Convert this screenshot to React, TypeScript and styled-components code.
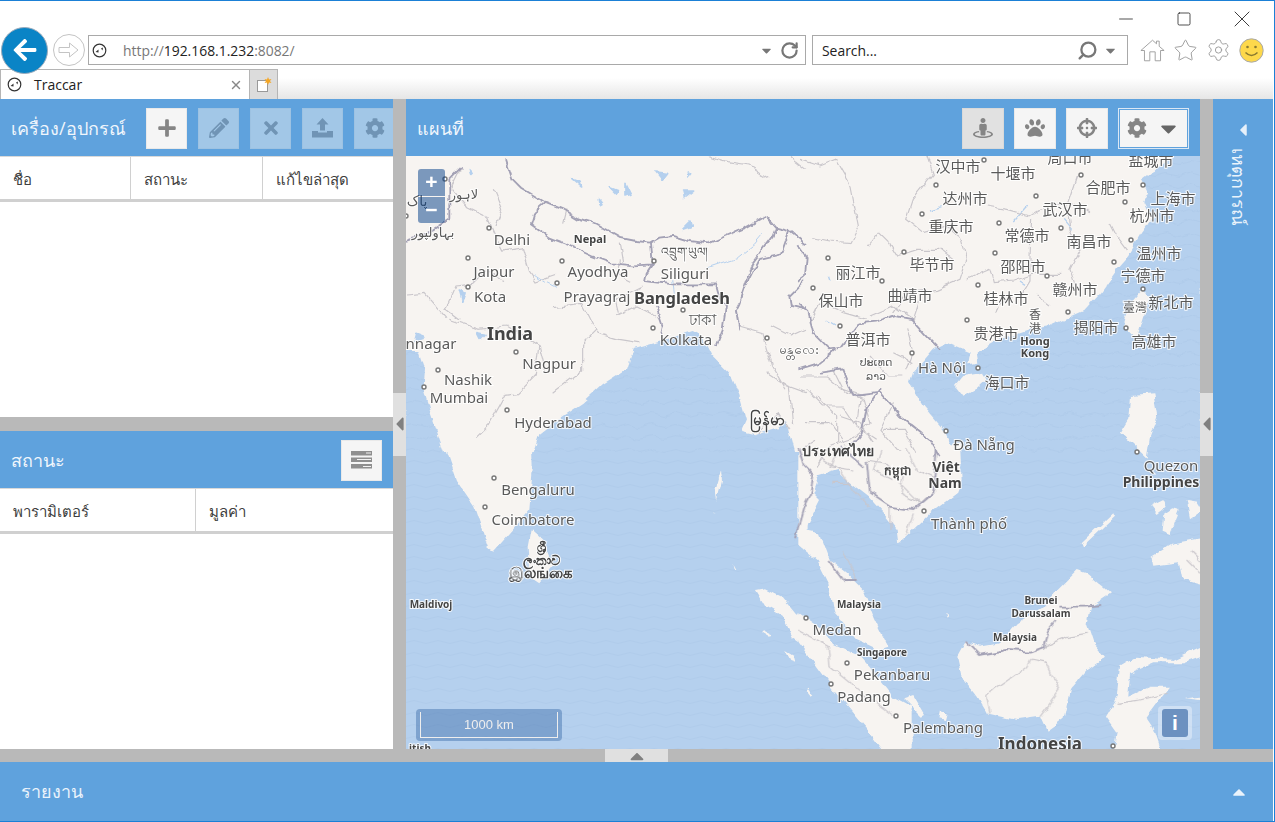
import * as React from "react";
import styled, { createGlobalStyle } from "styled-components";
import { FaArrowLeft, FaCaretDown, FaCaretLeft, FaCaretUp, FaCog, FaCrosshairs, FaPaw, FaPencilAlt, FaPlus, FaStreetView, FaTimes } from "react-icons/fa";
import { Minus, RotateCw, Search, Settings, Square, Star, X } from "lucide-react";

const PANEL = "#5fa2dd";
const SPLIT = "#b9b9b9";
const UI_FONT = '"Open Sans", "Noto Sans", "DejaVu Sans", sans-serif';

const Global = createGlobalStyle`
  html, body { margin: 0; padding: 0; height: 100%; background: #fff; }
  #root { height: 100%; }
  * { box-sizing: border-box; }
`;

const Win = styled.div`
  width: 1275px;
  height: 822px;
  display: flex;
  flex-direction: column;
  overflow: hidden;
  background: #fff;
  border-top: 1px solid #1b80d6;
  border-right: 1px solid #1b80d6;
  border-bottom: 1px solid #1b80d6;
  padding-right: 1px;
  font-family: ${UI_FONT};
`;

const TitleRow = styled.div`
  height: 33px;
  flex: none;
  display: flex;
  justify-content: flex-end;
  align-items: center;
  color: #111;
  padding: 2px 2px 0 0;
`;

const WinBtn = styled.div`
  width: 58px;
  display: flex;
  justify-content: center;
`;

const NavRow = styled.div`
  height: 35px;
  flex: none;
  display: flex;
  align-items: center;
  padding-bottom: 3px;
`;

const BackBtn = styled.div`
  width: 47px;
  height: 47px;
  margin: 0 5px 0 1px;
  flex: none;
  border-radius: 50%;
  background: #0a84c6;
  border: 1px solid #9ab;
  color: #fff;
  display: flex;
  align-items: center;
  justify-content: center;
  font-size: 26px;
  z-index: 2;
`;

const ForwardBtn = styled.div`
  width: 32px;
  height: 32px;
  flex: none;
  margin-right: 3px;
  border-radius: 50%;
  border: 1px solid #c4c4c4;
  display: flex;
  align-items: center;
  justify-content: center;
`;

const Field = styled.div<{ $w: number; $ml?: number }>`
  width: ${(p) => p.$w}px;
  margin-left: ${(p) => p.$ml ?? 0}px;
  height: 30px;
  flex: none;
  border: 1px solid #a9a9a9;
  display: flex;
  align-items: center;
  font-size: 13.9px;
  color: #222;
`;

const UrlGrey = styled.span`
  color: #777;
`;

const UrlText = styled.span`
  margin-left: 16px;
  flex: 1;
  white-space: nowrap;
`;

const SearchText = styled.span`
  margin-left: 9px;
  flex: 1;
`;

const Caret = styled.span<{ $l?: number; $r?: number }>`
  color: #777;
  display: flex;
  font-size: 15px;
  margin: 0 ${(p) => p.$r ?? 0}px 0 ${(p) => p.$l ?? 0}px;
`;

const Flip = styled(Caret)`
  transform: scaleX(-1);
`;

const ToolIcons = styled.div`
  display: flex;
  align-items: center;
  margin-left: 12px;
  gap: 8px;
  color: #999;
`;

const ToolSlot = styled.div`
  width: 25px;
  display: flex;
  justify-content: center;
`;

const TabRow = styled.div`
  height: 30px;
  flex: none;
  display: flex;
  align-items: flex-end;
  background: linear-gradient(#fff 0, #fff 30%, #e6e6e6 100%);
`;

const Tab = styled.div`
  width: 250px;
  height: 30px;
  display: flex;
  align-items: center;
  border: 1px solid #b5b5b5;
  border-bottom: 0;
  background: #fff;
  padding: 0 6px 0 3px;
  font-size: 14px;
  color: #222;
  z-index: 1;
`;

const TabTitle = styled.span`
  margin-left: 12px;
  flex: 1;
`;

const NewTab = styled.div`
  width: 28px;
  height: 30px;
  background: #dcdcdc;
  border: 1px solid #b5b5b5;
  border-left: 0;
  border-bottom: 0;
  display: flex;
  align-items: center;
  justify-content: center;
`;

const Globe = styled.svg`
  margin-left: 3px;
  flex: none;
`;

const Workspace = styled.div`
  flex: 1;
  min-height: 0;
  display: flex;
  flex-direction: column;
  background: ${SPLIT};
`;

const UpperArea = styled.div`
  flex: 1;
  min-height: 0;
  display: flex;
`;

const LeftColumn = styled.div`
  width: 393px;
  flex: none;
  display: flex;
  flex-direction: column;
`;

const Panel = styled.div<{ $h?: number }>`
  display: flex;
  flex-direction: column;
  background: #fff;
  ${(p) => (p.$h ? `height: ${p.$h}px; flex: none;` : "flex: 1; min-height: 0;")}
`;

const PanelHead = styled.div`
  height: 57px;
  flex: none;
  background: ${PANEL};
  display: flex;
  align-items: center;
  overflow: hidden;
  padding-top: 1px;
`;

const PanelTitle = styled.div`
  flex: 1;
  color: #f0f6fc;
  font-size: 18px;
  padding-left: 11px;
  white-space: nowrap;
`;

const ToolGroup = styled.div<{ $r: number; $gap?: number }>`
  display: flex;
  gap: ${(p) => p.$gap ?? 11}px;
  flex: none;
  margin-right: ${(p) => p.$r}px;
`;

const ToolButton = styled.div<{ $off?: boolean; $down?: boolean; $w?: number; $focus?: boolean }>`
  width: ${(p) => p.$w ?? 41}px;
  height: 41px;
  flex: none;
  display: flex;
  align-items: center;
  justify-content: center;
  gap: 9px;
  font-size: 20px;
  color: #858585;
  background: ${(p) => (p.$down ? "#e1e1e1" : "#f5f5f5")};
  border: 1px solid ${(p) => (p.$focus ? "#dbe8f5" : p.$down ? "#d9d9d9" : "#e9e9e9")};
  opacity: ${(p) => (p.$off ? 0.45 : 1)};
  ${(p) => p.$focus && `box-shadow: inset 0 0 0 1px ${PANEL};`}
`;

const DarkCaret = styled.span`
  display: flex;
  font-size: 25px;
  color: #666;
`;

const GridHead = styled.div`
  height: 46px;
  flex: none;
  display: flex;
  border-top: 1px solid #d9d9d9;
  border-bottom: 3px solid #d0d0d0;
`;

const GridCol = styled.div<{ $w?: number }>`
  ${(p) => (p.$w ? `width: ${p.$w}px; flex: none;` : "flex: 1;")}
  padding: 3px 0 0 13px;
  display: flex;
  align-items: center;
  font-size: 15px;
  color: #404040;
  border-right: 1px solid #d0d0d0;
  &:last-child { border-right: 0; }
`;

const HSplit = styled.div`
  height: 14px;
  flex: none;
`;

const VSplit = styled.div`
  width: 13px;
  flex: none;
  display: flex;
  flex-direction: column;
  justify-content: center;
`;

const VGrip = styled.div`
  height: 63px;
  background: #e0e0e0;
  display: flex;
  align-items: center;
  justify-content: center;
  color: #808080;
  font-size: 22px;
`;

const BottomSplit = styled.div`
  height: 13px;
  flex: none;
  display: flex;
  justify-content: center;
`;

const HGrip = styled.div`
  width: 63px;
  background: #e0e0e0;
  display: flex;
  align-items: center;
  justify-content: center;
  color: #808080;
  font-size: 22px;
`;

const MapPanel = styled.div`
  flex: 1;
  min-width: 0;
  display: flex;
  flex-direction: column;
`;

const MapBody = styled.div`
  flex: 1;
  min-height: 0;
  position: relative;
  overflow: hidden;
  background: #b5d0ee;
`;

const MapDrawing = styled.svg`
  display: block;
  width: 100%;
  height: 100%;
`;

const Rough = styled.g`
  filter: url(#rough);
`;

const Soft = styled.g`
  filter: blur(0.4px);
`;

const ZoomBox = styled.div`
  position: absolute;
  left: 12px;
  top: 13px;
  width: 27px;
  height: 54px;
  border-radius: 3px;
  overflow: hidden;
  display: flex;
  flex-direction: column;
  gap: 1px;
`;

const ZoomBtn = styled.div`
  flex: 1;
  background: rgba(0, 60, 136, 0.5);
  color: #fff;
  font: bold 21px/26px "Liberation Sans", sans-serif;
  text-align: center;
`;

const ScaleBox = styled.div`
  position: absolute;
  left: 10px;
  bottom: 8px;
  width: 146px;
  height: 32px;
  border-radius: 4px;
  background: rgba(0, 60, 136, 0.3);
  padding: 3px 4px;
`;

const ScaleBar = styled.div`
  height: 100%;
  border: 1px solid #eee;
  border-top: 0;
  color: #eee;
  font: 13px/25px "Liberation Sans", sans-serif;
  text-align: center;
`;

const InfoBox = styled.div`
  position: absolute;
  right: 8px;
  bottom: 9px;
  width: 34px;
  height: 34px;
  border-radius: 4px;
  background: rgba(255, 255, 255, 0.35);
  padding: 3px 4px;
`;

const InfoBtn = styled.div`
  height: 100%;
  border-radius: 3px;
  background: #6c91c0;
  color: #fff;
  font: bold 21px/28px "Liberation Sans", sans-serif;
  text-align: center;
`;

const RightRail = styled.div`
  width: 60px;
  flex: none;
  background: ${PANEL};
  display: flex;
  flex-direction: column;
  align-items: center;
  padding-top: 21px;
  color: #e6f0fa;
  font-size: 20px;
`;

const RailText = styled.div`
  writing-mode: vertical-rl;
  margin: 8px 8px 0 0;
  font-size: 18px;
  color: #eaf3fb;
  white-space: nowrap;
`;

const ReportBar = styled.div`
  height: 59px;
  flex: none;
  background: ${PANEL};
  display: flex;
  align-items: center;
  justify-content: space-between;
  padding: 0 24px 0 21px;
  color: #eaf3fb;
  font-size: 18px;
`;

const Label = styled.text<{ $size?: number; $bold?: boolean; $cjk?: boolean }>`
  font-family: ${(p) => (p.$cjk ? '"Noto Sans CJK SC", sans-serif' : '"Noto Sans", "DejaVu Sans", sans-serif')};
  font-size: ${(p) => p.$size ?? 15}px;
  font-weight: ${(p) => (p.$bold ? 700 : 400)};
  fill: ${(p) => (p.$bold ? "#444" : "#5a5a5a")};
  stroke: #fff;
  stroke-width: 2px;
  stroke-opacity: 0.85;
  paint-order: stroke;
  text-anchor: middle;
`;

const LAND = "#f7f4f1";
const WATER = "#b5d0ee";
const THICK = "#a3a1b5";
const THIN = "#c9c6cb";

type L = [string, number, number, number?, ("b" | "c")?];

const LABELS: L[] = [
  ["Delhi", 512, 245, 15], ["Jaipur", 494, 277, 15], ["Kota", 490, 302, 15],
  ["Ayodhya", 598, 277, 15], ["Siliguri", 685, 279, 15], ["Prayagraj", 597, 302, 15],
  ["Bangladesh", 682, 304, 16.5, "b"], ["Nepal", 590, 243, 11, "b"], ["India", 510, 340, 18, "b"],
  ["ঢাকা", 702, 325, 15], ["Kolkata", 686, 345, 15], ["nnagar", 431, 349, 15],
  ["Nagpur", 549, 369, 15], ["Nashik", 468, 385, 15], ["Mumbai", 459, 403, 15],
  ["Hyderabad", 553, 428, 15], ["Bengaluru", 538, 495, 15], ["Coimbatore", 533, 525, 15],
  ["Maldivoj", 431, 608, 10, "b"], ["မန္တလေး", 799, 354, 13], ["မြန်မာ", 767, 425, 15, "b"],
  ["بہاولپور", 433, 237, 13], ["لاہور", 464, 199, 13], ["پاک", 417, 206, 14],
  ["འབྲུག་ཡུལ།", 684, 256, 12],
  ["ශ්‍රී", 541, 552, 13, "b"], ["ලංකාව", 541, 565, 13, "b"], ["இலங்கை", 541, 578, 15, "b"],
  ["汉中市", 958, 172, 15, "c"], ["十堰市", 1013, 179, 15, "c"], ["周口市", 1070, 163, 15, "c"], ["盐城市", 1151, 166, 15, "c"],
  ["合肥市", 1108, 193, 15, "c"], ["上海市", 1173, 204, 15, "c"], ["杭州市", 1152, 221, 15, "c"], ["达州市", 965, 204, 15, "c"],
  ["武汉市", 1065, 215, 15, "c"], ["重庆市", 951, 232, 15, "c"], ["常德市", 1027, 241, 15, "c"], ["南昌市", 1089, 247, 15, "c"],
  ["温州市", 1159, 259, 15, "c"], ["丽江市", 858, 278, 15, "c"], ["毕节市", 932, 270, 15, "c"], ["邵阳市", 1023, 272, 15, "c"],
  ["宁德市", 1143, 281, 15, "c"], ["保山市", 841, 306, 15, "c"], ["曲靖市", 910, 301, 15, "c"], ["桂林市", 1006, 304, 15, "c"],
  ["赣州市", 1075, 295, 15, "c"], ["新北市", 1171, 308, 15, "c"], ["臺灣", 1135, 312, 12, "c"], ["香", 1035, 319, 12, "c"], ["港", 1035, 333, 12, "c"],
  ["揭阳市", 1096, 333, 15, "c"], ["贵港市", 996, 339, 15, "c"], ["普洱市", 868, 345, 15, "c"], ["高雄市", 1154, 347, 15, "c"],
  ["海口市", 1007, 388, 15, "c"], ["Hong", 1035, 345, 11, "b"], ["Kong", 1035, 357, 11, "b"], ["Hà Nội", 942, 373, 15],
  ["ປະເທດ", 876, 366, 11], ["ລາວ", 876, 380, 11], ["Đà Nẵng", 984, 450, 15], ["ประเทศไทย", 838, 456, 14, "b"], ["កម្ពុជា", 898, 475, 12, "b"],
  ["Việt", 946, 472, 14, "b"], ["Nam", 945, 488, 14, "b"], ["Thành phố", 969, 529, 15], ["Quezon", 1171, 471, 15],
  ["Philippines", 1161, 487, 14, "b"], ["Malaysia", 859, 608, 10, "b"], ["Brunei", 1041, 604, 10, "b"], ["Darussalam", 1041, 617, 10, "b"],
  ["Malaysia", 1015, 641, 10, "b"], ["Medan", 837, 635, 15], ["Singapore", 882, 656, 10, "b"], ["Pekanbaru", 892, 680, 15],
  ["Padang", 864, 702, 15], ["Palembang", 943, 733, 15], ["Indonesia", 1040, 750, 17, "b"], ["itish", 420, 752, 10, "b"],
];

const CITIES: [number, number][] = [
  [489, 228], [468, 258], [468, 287], [562, 261], [557, 283], [654, 261], [683, 310], [653, 328], [516, 352], [438, 370],
  [424, 387], [507, 410], [767, 338], [445, 179], [406, 216], [984, 160], [1081, 175], [1143, 185], [936, 185], [1036, 196],
  [1125, 202], [922, 214], [999, 223], [1061, 228], [1131, 240], [904, 252], [995, 253], [828, 258], [1114, 262], [1047, 276],
  [882, 281], [978, 285], [813, 288], [1143, 289], [1068, 312], [967, 320], [840, 326], [1126, 328], [912, 353], [978, 368],
  [946, 431], [494, 478], [485, 507], [806, 618], [924, 511], [847, 663], [831, 684], [896, 716], [1113, 746], [1137, 452],
];

const MapArt = () => (
  <MapDrawing viewBox="406 156 794 593" preserveAspectRatio="none">
    <defs>
      <filter id="rough" x="-5%" y="-5%" width="110%" height="110%">
        <feTurbulence type="fractalNoise" baseFrequency="0.07" numOctaves="3" seed="4" />
        <feDisplacementMap in="SourceGraphic" scale="7" xChannelSelector="R" yChannelSelector="G" />
        <feGaussianBlur stdDeviation="0.45" />
      </filter>
      <pattern id="sea" width="24" height="12" patternUnits="userSpaceOnUse">
        <rect width="24" height="12" fill={WATER} />
        <path d="M0 6 q6 -3 12 0 t12 0" fill="none" stroke="#b0cceb" strokeWidth="1" />
      </pattern>
      <pattern id="seaZ" width="72" height="36" patternUnits="userSpaceOnUse">
        <rect width="72" height="36" fill={WATER} />
        <path d="M0 18 q18 -9 36 0 t36 0" fill="none" stroke="#b0cceb" strokeWidth="3" />
      </pattern>
    </defs>
    <rect x="406" y="156" width="794" height="300" fill={LAND} />
    <rect x="406" y="452" width="794" height="297" fill="url(#sea)" />
    <Rough>
      <g transform="translate(406 156) scale(.3333)" fill="url(#seaZ)">
        <polygon points="-5,585 40,585 55,630 50,690 70,760 120,905 -5,905" />
        <polygon points="375,910 400,835 470,780 530,740 590,685 660,640 680,580 750,560 800,545 860,525 890,540 920,600 970,650 1000,720 1020,790 1005,825 1050,835 1110,815 1140,795 1170,910" />
        <g fill={WATER} stroke={WATER} strokeWidth="5" strokeLinejoin="round">
          <path d="M500 65l25 10 5 15zM610 95l25 10-5 10zM660 85l15 30-15 5zM750 45l35 5-15 20zM830 105l30 0-25 20zM830 220l25-25 5 15zM190 40l10 10-5 5zM580 130l8 10-6 3zM850 45l10 5-8 10z" />
          <path d="M215 530l25 5-15 15zM30 535l25 10-30 10zM160 405l20 10-10 25z" />
        </g>
        <path fill="none" stroke={WATER} strokeWidth="3" d="M905 335l90-30 50-40 25-30M800 370l5 40M385 355l30 20 40 20" />
      </g>
      <g transform="translate(800 156) scale(.3333)" fill="url(#seaZ)">
        <polygon points="1125,-5 1090,30 1050,50 1025,70 1045,110 1030,140 1055,190 1020,240 985,300 950,340 900,410 850,465 750,510 690,520 600,550 530,590 535,620 505,625 510,590 440,560 400,580 340,650 330,680 370,750 430,820 470,910 1205,910 1205,-5" />
        <polygon fill={LAND} points="465,690 490,660 550,650 562,670 530,700 490,722" />
        <polygon fill={LAND} points="1030,395 1052,420 1010,550 970,510 990,440" />
        <polygon fill={LAND} points="990,720 1060,715 1072,780 1050,840 1040,905 960,830 985,790" />
        <path fill="none" stroke={WATER} strokeWidth="4" d="M640 195l40-45M790 190l25 30M390 165l35-10M85 360l5 15M80 495l25 15M660 375l15 10" />
      </g>
      <g transform="translate(406 450) scale(.3333)" fill={LAND}>
        <polygon points="112,-20 150,90 205,170 245,290 265,302 320,240 370,180 380,60 378,-20" />
        <polygon points="375,238 410,270 440,350 400,400 370,380 365,290" />
        <polygon points="1170,-20 1190,60 1195,200 1185,290 1205,305 1205,-20" />
        <polygon points="1050,420 1080,415 1130,440 1170,490 1205,510 1205,590 1160,560 1130,500 1080,470" />
        <path d="M945 60l3 30-15 60-5-30zM925 180l3 10-5 0zM980 345l8 15-5 0zM1070 540l30 15-5 5-25-15zM1135 600l25 15 5 20-15-5z" />
      </g>
      <g transform="translate(800 450) scale(.3333)" fill={LAND}>
        <polygon points="-5,-20 480,-20 485,90 470,130 390,190 360,220 295,280 290,240 250,190 205,140 140,90 110,60 60,75 40,130 60,150 30,210 15,240 60,250 90,330 140,370 190,420 225,510 265,590 235,600 170,570 100,490 85,400 50,330 -5,285" />
        <polygon points="-5,490 60,535 100,580 170,610 240,690 280,740 335,770 335,905 250,905 200,840 100,720 -5,575" />
        <polygon points="500,575 475,620 490,690 530,740 560,790 650,810 720,800 740,845 790,810 810,720 860,660 915,620 880,580 860,520 870,470 930,430 860,370 830,360 770,420 730,470 650,520 600,580 540,590" />
        <polygon points="1205,590 1120,630 1010,620 960,650 950,740 915,800 950,850 940,905 1085,905 1060,830 1040,800 1070,760 1110,710 1050,710 985,740 990,670 1060,640 1150,640 1205,620" />
        <polygon points="1050,170 1090,150 1100,170 1070,195" />
        <polygon points="1090,195 1120,175 1140,180 1110,255 1085,245" />
        <polygon points="1160,150 1190,155 1205,180 1170,205" />
        <polygon points="1055,320 1120,280 1205,265 1205,405 1150,390 1140,340 1060,350" />
        <polygon points="940,190 945,200 850,290 845,280" />
        <path d="M20 710l20 25-5 5-20-25zM310 745l30-10 35 60-10 5zM420 780l20 10-5 20-20-5zM435 485l10 10-5 5zM1155 745l45-5 0 10z" />
      </g>
      <g transform="translate(406 156) scale(.3333)" fill="none">
        <g stroke={THIN} strokeWidth="3.5">
          <path d="M165 35l-30 60 50 60 60 30 30 70 15 30 60-10 20 70 20 30 60-20M265 100l25 60-20 50M300 375l-60-30-40 40-50 5-30 70 40 30M130 490l90 30 80-10 100 60 20 80M395 570l-10 90-50 50-35 5-50 90-40 40M440 455l90-10 40 80-40 40 0 80-90 70M630 480l60-30 60 30M570 530l70 20 60 10M0 420l60-5 60 70" />
          <path d="M1000 510l70 20 30 100 40 70M1095 510l60 30 45-20M1085 650l60 40 55 20M1060 830l60-60 30 50M1150 690l10 120M640 260l10 60M480 160l-10 40M900 0l60 20 70 10 60 40M640 310l-5 50 40 20M640 470l-10-40 80-40M1150 0l50 40" />
        </g>
        <g stroke={THICK} strokeWidth="5.500">
          <path d="M300 10l20 60 25 25 75 45 50 20 50 30 50 15 30 17 40 23 50 10 45 5 25-15 40-5 50 15 60 7 50-22 60-25 60-35 30 35 40 10 50 40" />
          <path d="M420 140l-35 30-10 35 55 40 65 25 65 30 60 22 60 6 60-3-5-65M745 320l-20 30-5 25 80 10 50 0 80 0 10 35 20 30-10 70-20 50M750 450l20 60-5 30" />
          <path d="M1110 215l-10 25-60 80-40 120-10 20 10 60M1150 225l-25 70-65 15-40 80M165 35l-35 35 0 70 0 50-70 45-60 20M1200 370l-50 50 5 30 45 10" />
        </g>
      </g>
      <g transform="translate(800 156) scale(.3333)" fill="none">
        <g stroke={THIN} strokeWidth="3.5">
          <path d="M0 10l60 20 50-20 40 70 25 130-25 50-60-5-50-10M380 -5l20 60-60 75-20 60 50 40 70-20 40 30 20 70-20 60-70 30-90 10-40 60M205 270l30-40 30 30 25 40 60-20 70 0 50 40M560 150l60 10 70 20 50-30 70-10 60 30M695 185l-5 120 0 70-30 50M830 60l-30 90 10 70 30 60-30 60 20 60M500 370l70-30 10 40 60-5 60-20 90 0M930 200l20 40 30 40M590 470l10-30 40-20M710 420l40 30M210 480l70-30 60 40 20-60M30 500l30-60 70 30 70 20M0 660l80 0 60 50 50 20 20 70 -60 50-60 20-40 60M50 720l60 60 0 90M180 730l-10 80 60 40M280 740l-40 80 60 70M320 520l20 70-20 50M20 700l50 50 60 0 40 60M100 640l30 60 60 20M210 600l50 60 50 0M120 780l60 20 40 60M20 800l70 0 50 70M250 820l60 0 40 70M280 590l60 30M0 880l50-30" />
        </g>
        <g stroke={THICK} strokeWidth="5.500">
          <path d="M-5 265l25 35-5 60-20 15M-5 445l30 25 15 60 50 50 35-5 50-70 50-5 60-20 50 10 45 50 40 40M-5 640l65-20 50-40M60 650l70-10 30 80 80-10 60 70 90 70 30 50M240 700l-40 60-15 70-30 40" />
        </g>
      </g>
      <g transform="translate(800 450) scale(.3333)" fill="none">
        <g stroke={THIN} strokeWidth="3.500">
          <path d="M60 20l60 40 40 60 50 50M200 30l60 10 50 40 -10 50 60 30M150 100l-50 0M320 0l30 60 60 30M240 0l-20 60 60 30M270 170l0 70M340 190l-20 60M85 590l5 60 110 90 80 60M-5 540l95 50M690 630l-10 20-100 70-20 20 10 50M690 630l50 10 40 80-60 80M730 590l70-30 60-10M950 760l70-10 80-20M130 300l40 90M110 0l-20 50 70 10M400 60l50 10M300 100l60 60 50-40M1170 300l30 30M1160 330l40 40" />
        </g>
        <g stroke={THICK} strokeWidth="5.500">
          <path d="M-5 -5l15 50 30 30 -10 60 -20 40 -25 90M200 30l10 100 60 40 70 10 60-50 10-130M85 330l45 60 40 0M120 -10l70 60M500 575l40 40 80-15 70 5 40-15 15-50 25-30M775 470l75 0 50-5" />
        </g>
      </g>
    </Rough>
    <Soft>
      <g fill="#fff" stroke="#777" strokeWidth="1.4">
        {CITIES.map(([x, y]) => (
          <circle key={`${x}-${y}`} cx={x} cy={y} r="2" />
        ))}
      </g>
      {LABELS.map(([t, x, y, s, k]) => (
        <Label key={`${t}${x}`} x={x} y={y} $size={s} $bold={k === "b"} $cjk={k === "c"}>
          {t}
        </Label>
      ))}
    </Soft>
  </MapDrawing>
);

const PageGlobe = () => (
  <Globe width="15" height="15" viewBox="0 0 15 15">
    <circle cx="7.500" cy="7.500" r="6.300" fill="#fff" stroke="#333" strokeWidth="1.200" />
    <path d="M3.500 9l3-2.500v3zM9 5.500l2-1-.5 3z" fill="#333" />
  </Globe>
);

const NewTabIcon = () => (
  <svg width="16" height="16" viewBox="0 0 16 16">
    <rect x="1.500" y="3.500" width="10" height="11" fill="#fff" stroke="#999" />
    <path d="M12 0l1 2.500 2.500-.5-1.500 2 1.500 2-2.500-.5-1 2.500-1-2.500-2.500.5 1.500-2-1.500-2 2.500.5z" fill="#f5a623" />
  </svg>
);

const UploadIcon = () => (
  <svg width="21" height="20" viewBox="0 0 21 20" fill="currentColor">
    <path d="M10.500 0l6 6.500h-3.500v6h-5v-6h-3.500z" />
    <path d="M0 13h6v1.500h9v-1.500h6v6.500h-21z" />
  </svg>
);

const StackIcon = () => (
  <svg width="22" height="18" viewBox="0 0 22 18">
    <path d="M0 0h21v4.500H0zM0 6.500h21V11H0zM0 13h21v4.500H0z" fill="#8f8f8f" />
    <path d="M15 2h5M6 8.500h14M12 15.500h8" stroke="#f2f2f2" strokeWidth="1.200" />
  </svg>
);

const ForwardIcon = () => (
  <svg width="22" height="20" viewBox="0 0 22 20">
    <path d="M1 7.500h10.500V3l8.500 7-8.500 7v-4.500H1z" fill="none" stroke="#c4c4c4" />
  </svg>
);

const HomeIcon = () => (
  <svg width="28" height="25" viewBox="0 0 28 25">
    <path d="M1 12.500L14 1l4.500 4V2h3v5.800L27 12.500h-4V24h-6V14h-6v10H5V12.500z" fill="#fff" stroke="#999" />
  </svg>
);

const SmileyIcon = () => (
  <svg width="25" height="25" viewBox="0 0 25 25">
    <circle cx="12.500" cy="12.500" r="11.700" fill="#fdd84b" stroke="#a8a8a8" />
    <circle cx="8.500" cy="9" r="1.300" fill="#8a7a30" />
    <circle cx="16.500" cy="9" r="1.300" fill="#8a7a30" />
    <path d="M6.500 14.500q6 6 12 0" fill="none" stroke="#8a7a30" strokeWidth="1.500" />
  </svg>
);

const App = () => (
  <Win>
    <Global />
    <TitleRow>
      <WinBtn><Minus size={22} strokeWidth={0.8} /></WinBtn>
      <WinBtn><Square size={16} strokeWidth={1.1} /></WinBtn>
      <WinBtn><X size={28} strokeWidth={0.7} /></WinBtn>
    </TitleRow>
    <NavRow>
      <BackBtn>
        <FaArrowLeft />
      </BackBtn>
      <ForwardBtn>
        <ForwardIcon />
      </ForwardBtn>
      <Field $w={718}>
        <PageGlobe />
        <UrlText>
          <UrlGrey>http://</UrlGrey>192.168.1.232<UrlGrey>:8082/</UrlGrey>
        </UrlText>
        <Caret><FaCaretDown /></Caret>
        <Caret $l={6} $r={6}>
          <RotateCw size={19} strokeWidth={2.8} />
        </Caret>
      </Field>
      <Field $w={316} $ml={6}>
        <SearchText>Search...</SearchText>
        <Flip>
          <Search size={21} strokeWidth={2.6} />
        </Flip>
        <Caret $l={5} $r={9}><FaCaretDown /></Caret>
      </Field>
      <ToolIcons>
        <ToolSlot><HomeIcon /></ToolSlot>
        <ToolSlot><Star size={27} strokeWidth={0.9} /></ToolSlot>
        <ToolSlot><Settings size={26} strokeWidth={0.9} /></ToolSlot>
        <ToolSlot><SmileyIcon /></ToolSlot>
      </ToolIcons>
    </NavRow>
    <TabRow>
      <Tab>
        <PageGlobe />
        <TabTitle>Traccar</TabTitle>
        <X size={14} color="#888" strokeWidth={2.4} />
      </Tab>
      <NewTab>
        <NewTabIcon />
      </NewTab>
    </TabRow>
    <Workspace>
      <UpperArea>
        <LeftColumn>
          <Panel $h={318}>
            <PanelHead>
              <PanelTitle>เครื่อง/อุปกรณ์</PanelTitle>
              <ToolGroup $r={-2}>
                <ToolButton><FaPlus /></ToolButton>
                <ToolButton $off><FaPencilAlt /></ToolButton>
                <ToolButton $off><FaTimes /></ToolButton>
                <ToolButton $off><UploadIcon /></ToolButton>
                <ToolButton $off><FaCog /></ToolButton>
              </ToolGroup>
            </PanelHead>
            <GridHead>
              <GridCol $w={131}>ชื่อ</GridCol>
              <GridCol $w={132}>สถานะ</GridCol>
              <GridCol>แก้ไขล่าสุด</GridCol>
            </GridHead>
          </Panel>
          <HSplit />
          <Panel>
            <PanelHead>
              <PanelTitle>สถานะ</PanelTitle>
              <ToolGroup $r={11}>
                <ToolButton><StackIcon /></ToolButton>
              </ToolGroup>
            </PanelHead>
            <GridHead>
              <GridCol $w={196}>พารามิเตอร์</GridCol>
              <GridCol>มูลค่า</GridCol>
            </GridHead>
          </Panel>
        </LeftColumn>
        <VSplit>
          <VGrip><FaCaretLeft /></VGrip>
        </VSplit>
        <MapPanel>
          <PanelHead>
            <PanelTitle>แผนที่</PanelTitle>
            <ToolGroup $r={11} $gap={10}>
              <ToolButton $down $w={42}><FaStreetView /></ToolButton>
              <ToolButton $w={42}><FaPaw /></ToolButton>
              <ToolButton $w={42}><FaCrosshairs /></ToolButton>
              <ToolButton $w={71} $focus><FaCog /><DarkCaret><FaCaretDown /></DarkCaret></ToolButton>
            </ToolGroup>
          </PanelHead>
          <MapBody>
            <MapArt />
            <ZoomBox>
              <ZoomBtn>+</ZoomBtn>
              <ZoomBtn>−</ZoomBtn>
            </ZoomBox>
            <ScaleBox><ScaleBar>1000 km</ScaleBar></ScaleBox>
            <InfoBox><InfoBtn>i</InfoBtn></InfoBox>
          </MapBody>
        </MapPanel>
        <VSplit>
          <VGrip><FaCaretLeft /></VGrip>
        </VSplit>
        <RightRail>
          <FaCaretLeft />
          <RailText>เหตุการณ์</RailText>
        </RightRail>
      </UpperArea>
      <BottomSplit>
        <HGrip><FaCaretUp /></HGrip>
      </BottomSplit>
      <ReportBar>
        รายงาน
        <FaCaretUp size={20} />
      </ReportBar>
    </Workspace>
  </Win>
);

export default App;
